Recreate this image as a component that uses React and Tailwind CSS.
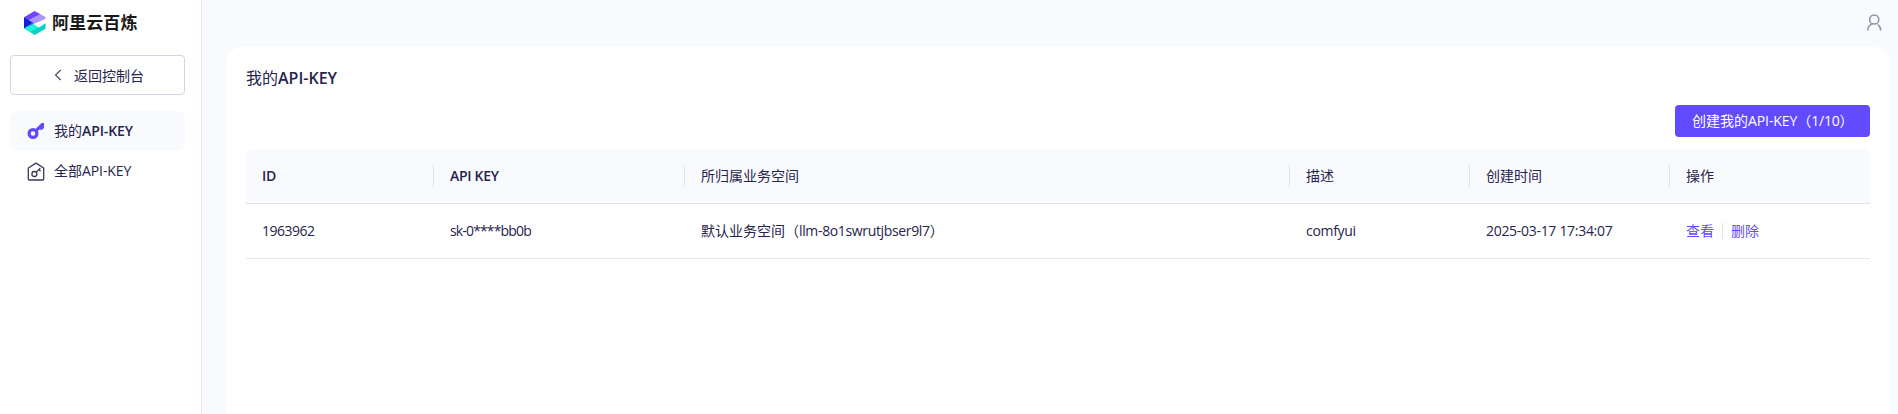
const columns = [
  { title: 'ID', latin: true },
  { title: 'API KEY', latin: true },
  { title: '所归属业务空间' },
  { title: '描述' },
  { title: '创建时间' },
  { title: '操作' },
];

const grid = 'grid grid-cols-[188px_251px_605px_180px_200px_200px] text-sm';

function Logo() {
  return (
    <svg width="22" height="24" viewBox="0 0 22 24">
      <path d="M0 6.2 10.6 0 16.5 3.2 4.6 9.4Z" fill="#7045f5" />
      <path d="M4.6 9.4 16.5 3.2 21.5 6v1.8L9.6 13 4.6 9.8Z" fill="#ab94ff" />
      <path d="M0 6.2 9 11.8 0 17.5Z" fill="#0c20d8" />
      <path d="M0 17.5 9 11.8 9.6 13.6Z" fill="#1b62ef" />
      <path d="M0 17.4 9 13.2 14.8 16.4 21.6 12.2v5.6L10.8 24Z" fill="#0bd3c4" />
      <path d="M0 17.4 9 13.2 14.8 16.4 6 20.8Z" fill="#1ff0d8" />
    </svg>
  );
}

function KeyIcon() {
  return (
    <svg width="18" height="18" viewBox="0 0 18 18" fill="none" stroke="#624aff">
      <circle cx="6" cy="11.5" r="3.9" strokeWidth="3.2" />
      <path d="M8.8 8.8 15.6 2.4" strokeWidth="3.2" />
      <path d="M11 5.8 14.4 8.2 17 5.9V1.2L15.2.8Z" fill="#624aff" stroke="none" />
    </svg>
  );
}

function HouseKeyIcon() {
  return (
    <svg width="18" height="19" viewBox="0 0 18 19" fill="none" stroke="#3b3858" strokeWidth="1.3">
      <path d="M1.3 6 9 1.1 16.7 6v11q0 1-1 1H2.3q-1 0-1-1Z" strokeLinejoin="round" />
      <circle cx="7.4" cy="12" r="2.5" />
      <path d="M9.2 10.1 13.4 5.9M11.7 7.6l1.9 1.7" />
    </svg>
  );
}

export default function App() {
  return (
    <div className="flex h-[414px] w-full overflow-hidden bg-[#f9fafe] font-['Open_Sans','Noto_Sans_CJK_SC',sans-serif] text-[#26244c]">
      <aside className="w-[202px] shrink-0 border-r border-[#e9eaf0] bg-white pl-[10px]">
        <div className="flex h-[55px] items-start pt-[11px] pl-[14px]">
          <Logo />
          <span className="ml-[6px] text-[17px] leading-[24px] font-bold tracking-[0.1px] text-[#181818]">阿里云百炼</span>
        </div>
        <button className="flex h-10 w-[175px] items-center rounded-[4px] border border-[#d5d4e0] bg-white pl-[43px] text-sm">
          <svg width="8" height="12" viewBox="0 0 8 12" fill="none" stroke="#45445f" strokeWidth="1.1">
            <path d="M6.7 1 1.5 6l5.2 5" />
          </svg>
          <span className="ml-[12px] pt-px">返回控制台</span>
        </button>
        <nav className="mt-4 w-[175px] text-sm">
          <a className="flex h-10 items-center rounded-lg bg-[#f9fafe] pl-[17px]">
            <KeyIcon />
            <span className="ml-[9px]">
              我的<span className="font-semibold tracking-[-0.1px]">API-KEY</span>
            </span>
          </a>
          <a className="flex h-10 items-center pl-[17px]">
            <HouseKeyIcon />
            <span className="ml-[9px]">
              全部<span className="tracking-[-0.1px]">API-KEY</span>
            </span>
          </a>
        </nav>
      </aside>

      <main className="flex flex-1 flex-col pr-2 pl-6">
        <header className="flex h-[47px] shrink-0 items-start justify-end pt-[14px] pr-[8px]">
          <svg width="15" height="17" viewBox="0 0 15 17" fill="none" stroke="#8f90a8" strokeWidth="1.5">
            <circle cx="7.2" cy="5.5" r="4.6" />
            <path d="M.8 16.5c0-3.6 1.8-5.5 4.4-6.6M13.7 16.5c0-3.1-1.2-4.8-3-6" />
          </svg>
        </header>
        <section className="flex-1 rounded-t-2xl bg-white px-5 pt-[19px]">
          <h1 className="h-6 text-base leading-6">
            我的<span className="font-semibold">API-KEY</span>
          </h1>
          <div className="mt-[15px] flex justify-end">
            <button className="h-8 w-[195px] rounded-[4px] bg-[#624aff] pl-[17px] text-left text-sm whitespace-nowrap text-white">
              创建我的<span className="tracking-[-0.1px]">API-KEY</span>（<span className="tracking-[-0.2px]">1/10</span>）
            </button>
          </div>
          <div className="mt-3">
            <div className={`${grid} h-[55px] items-center rounded-t-lg border-b border-[#e2e3e9] bg-[#f9fafe]`}>
              {columns.map((c, i) => (
                <div
                  key={c.title}
                  className={`flex h-[22px] items-center border-[#e2e3e9] pl-4 ${i < 5 ? 'border-r' : ''} ${c.latin ? 'font-semibold tracking-[-0.3px]' : ''}`}
                >
                  {c.title}
                </div>
              ))}
            </div>
            <div className={`${grid} h-[55px] items-center border-b border-[#e5e6eb] *:pl-4`}>
              <div className="tracking-[-0.5px]">1963962</div>
              <div className="tracking-[-0.85px]">sk-0****bb0b</div>
              <div>
                默认业务空间（<span className="tracking-[-0.35px]">llm-8o1swrutjbser9l7</span>）
              </div>
              <div className="tracking-[-0.3px]">comfyui</div>
              <div className="tracking-[-0.3px]">2025-03-17 17:34:07</div>
              <div className="flex items-center text-[#624aff]">
                <a>查看</a>
                <span className="mx-2 h-4 w-px bg-[#e5e6eb]" />
                <a>删除</a>
              </div>
            </div>
          </div>
        </section>
      </main>
    </div>
  );
}
